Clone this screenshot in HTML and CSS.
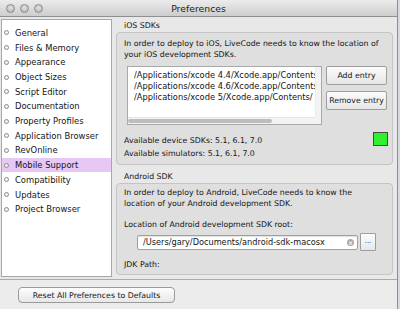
FILE: index.html
```html
<!DOCTYPE html>
<html>
<head>
<meta charset="utf-8">
<title>Preferences</title>
<link rel="stylesheet" href="styles.css">
</head>
<body>
<div class="window">
  <div class="titlebar">
    <div class="lights"><span class="light"></span><span class="light"></span><span class="light"></span></div>
    <div class="title">Preferences</div>
    <div></div>
  </div>
  <div class="main">
    <ul class="sidebar">
      <li><span class="bullet"></span>General</li>
      <li><span class="bullet"></span>Files &amp; Memory</li>
      <li><span class="bullet"></span>Appearance</li>
      <li><span class="bullet"></span>Object Sizes</li>
      <li><span class="bullet"></span>Script Editor</li>
      <li><span class="bullet"></span>Documentation</li>
      <li><span class="bullet"></span>Property Profiles</li>
      <li><span class="bullet"></span>Application Browser</li>
      <li><span class="bullet"></span>RevOnline</li>
      <li class="active"><span class="bullet"></span>Mobile Support</li>
      <li><span class="bullet"></span>Compatibility</li>
      <li><span class="bullet"></span>Updates</li>
      <li><span class="bullet"></span>Project Browser</li>
    </ul>
    <div class="content">
      <div class="section-label">iOS SDKs</div>
      <div class="group ios">
        <p class="desc">In order to deploy to iOS, LiveCode needs to know the location of<br>your iOS development SDKs.</p>
        <div class="sdk-row">
          <div class="listbox">
            <div class="lines">
              <div class="line">/Applications/xcode 4.4/Xcode.app/Contents/</div>
              <div class="line">/Applications/xcode 4.6/Xcode.app/Contents/</div>
              <div class="line">/Applications/xcode 5/Xcode.app/Contents/</div>
            </div>
            <div class="vstrip"></div>
            <div class="hscroll"><div class="thumb"></div></div>
            <div class="corner"></div>
          </div>
          <div class="btns">
            <button class="btn">Add entry</button>
            <button class="btn">Remove entry</button>
          </div>
        </div>
        <div class="avail-row">
          <div class="avail">
            <div>Available device SDKs: 5.1, 6.1, 7.0</div>
            <div>Available simulators: 5.1, 6.1, 7.0</div>
          </div>
          <div class="status"></div>
        </div>
      </div>
      <div class="section-label second">Android SDK</div>
      <div class="group android">
        <p class="desc">In order to deploy to Android, LiveCode needs to know the<br>location of your Android development SDK.</p>
        <div class="field-label">Location of Android development SDK root:</div>
        <div class="field-row">
          <div class="field">
            <span class="field-text">/Users/gary/Documents/android-sdk-macosx</span>
            <span class="clear">&times;</span>
          </div>
          <button class="dots">...</button>
        </div>
        <div class="field-label jdk">JDK Path:</div>
      </div>
    </div>
  </div>
  <div class="bottombar">
    <button class="reset">Reset All Preferences to Defaults</button>
  </div>
</div>
</body>
</html>
```
FILE: styles.css
```css
html, body {
  margin: 0;
  padding: 0;
}
body {
  background: #d6dbe2;
  font-family: "DejaVu Sans", sans-serif;
  font-size: 7.8px;
  color: #141414;
  width: 400px;
  height: 309px;
  overflow: hidden;
}
.window {
  width: 397px;
  height: 309px;
  background: #e8e8e8;
  border-right: 1px solid #8e8e8e;
  display: flex;
  flex-direction: column;
  overflow: hidden;
}
.titlebar {
  height: 16px;
  flex: none;
  border-bottom: 1px solid #8f8f8f;
  background: linear-gradient(#ececec, #cdcdcd);
  display: grid;
  grid-template-columns: 1fr auto 1fr;
  align-items: center;
}
.lights {
  display: flex;
  gap: 5px;
  padding-left: 6px;
}
.light {
  width: 9px;
  height: 9px;
  box-sizing: border-box;
  border-radius: 50%;
  border: 1px solid #8c8c8c;
  background: radial-gradient(circle at 50% 40%, #e4e4e4 0%, #b8b8b8 80%);
}
.title {
  font-size: 9.3px;
  color: #222;
}
.main {
  height: 262px;
  flex: none;
  box-sizing: border-box;
  padding: 2px 0 2px 1px;
  display: flex;
}
.sidebar {
  width: 111px;
  height: 258px;
  box-sizing: border-box;
  margin: 0;
  padding: 5.6px 0 0 0;
  list-style: none;
  background: #fff;
  border: 1px solid #a7a7a7;
  font-size: 8.4px;
}
.sidebar li {
  height: 14.7px;
  display: flex;
  align-items: center;
  padding-left: 2px;
  white-space: nowrap;
}
.sidebar li.active {
  background: #e7c7f3;
}
.bullet {
  width: 5px;
  height: 5px;
  box-sizing: border-box;
  border-radius: 50%;
  border: 1px solid #8a8a8a;
  background: #f4f4f4;
  margin-right: 6px;
  flex: none;
}
.content {
  flex: 1;
  margin: 0 4px 0 4px;
  display: flex;
  flex-direction: column;
  min-width: 0;
}
.section-label {
  line-height: 13px;
  padding-left: 8px;
}
.section-label.second {
  margin-top: 5px;
}
.group {
  border: 1px solid #c4c4c4;
  border-radius: 4px;
  background: #dfdfdf;
  padding: 6px 4px 4px 7px;
}
.group.android {
  padding: 4px 4px 3px 7px;
}
.desc {
  margin: 0;
  line-height: 10.5px;
  white-space: nowrap;
}
.sdk-row {
  display: flex;
  gap: 4px;
  margin: 6px 0 0 3px;
}
.listbox {
  width: 195px;
  height: 59px;
  box-sizing: border-box;
  border: 1px solid #a9a9a9;
  background: #fff;
  display: grid;
  grid-template-columns: 1fr 6px;
  grid-template-rows: 1fr 7px;
}
.lines {
  overflow: hidden;
  padding: 2.5px 0 0 6px;
  line-height: 11px;
  font-size: 8.3px;
  min-width: 0;
}
.line {
  white-space: nowrap;
  overflow: hidden;
}
.vstrip {
  background: #f3f3f3;
  border-left: 1px solid #ececec;
}
.hscroll {
  background: #f3f3f3;
  border-top: 1px solid #e6e6e6;
  display: flex;
  align-items: center;
}
.thumb {
  width: 144px;
  height: 4px;
  border-radius: 2px;
  background: #bdbdbd;
}
.corner {
  background: #f3f3f3;
}
.btns {
  display: flex;
  flex-direction: column;
  gap: 6px;
}
.btn {
  width: 61px;
  height: 19px;
  box-sizing: border-box;
  padding: 0;
  font-family: inherit;
  font-size: 7.8px;
  color: #141414;
  border: 1px solid #9d9d9d;
  border-radius: 2px;
  background: linear-gradient(#fcfcfc, #e6e6e6);
}
.avail-row {
  display: flex;
  justify-content: space-between;
  margin-top: 9px;
}
.avail {
  line-height: 13px;
}
.status {
  width: 15px;
  height: 14px;
  box-sizing: border-box;
  border: 1px solid #4a4a4a;
  background: #2ef02e;
  margin-top: -2px;
}
.field-label {
  line-height: 12px;
  margin-top: 10px;
}
.field-label.jdk {
  margin-top: 8px;
}
.field-row {
  display: flex;
  align-items: center;
  gap: 2px;
  margin: 2px 0 0 13px;
  height: 18px;
}
.field {
  width: 221px;
  height: 15px;
  box-sizing: border-box;
  border: 1px solid #9f9f9f;
  border-radius: 2px;
  background: #fff;
  box-shadow: inset 0 1px 1px rgba(0,0,0,0.12);
  display: flex;
  align-items: center;
  justify-content: space-between;
  padding: 0 3px 0 5px;
  font-size: 8.2px;
}
.field-text {
  white-space: nowrap;
}
.clear {
  width: 7px;
  height: 7px;
  border-radius: 50%;
  background: #a9a9a9;
  color: #fff;
  font-size: 6px;
  line-height: 7px;
  text-align: center;
  font-weight: bold;
}
.dots {
  width: 16px;
  height: 18px;
  box-sizing: border-box;
  padding: 0 0 2px 0;
  font-family: inherit;
  font-size: 7px;
  color: #333;
  border: 1px solid #9d9d9d;
  border-radius: 1px;
  background: linear-gradient(#fcfcfc, #e8e8e8);
}
.bottombar {
  flex: 1;
  border-top: 1px solid #ababab;
  background: #ececec;
  padding: 7px 0 0 18px;
}
.reset {
  width: 157px;
  height: 16px;
  box-sizing: border-box;
  padding: 0;
  font-family: inherit;
  font-size: 7.8px;
  color: #141414;
  border: 1px solid #9a9a9a;
  border-radius: 4px;
  background: linear-gradient(#fdfdfd, #e7e7e7);
}
```
